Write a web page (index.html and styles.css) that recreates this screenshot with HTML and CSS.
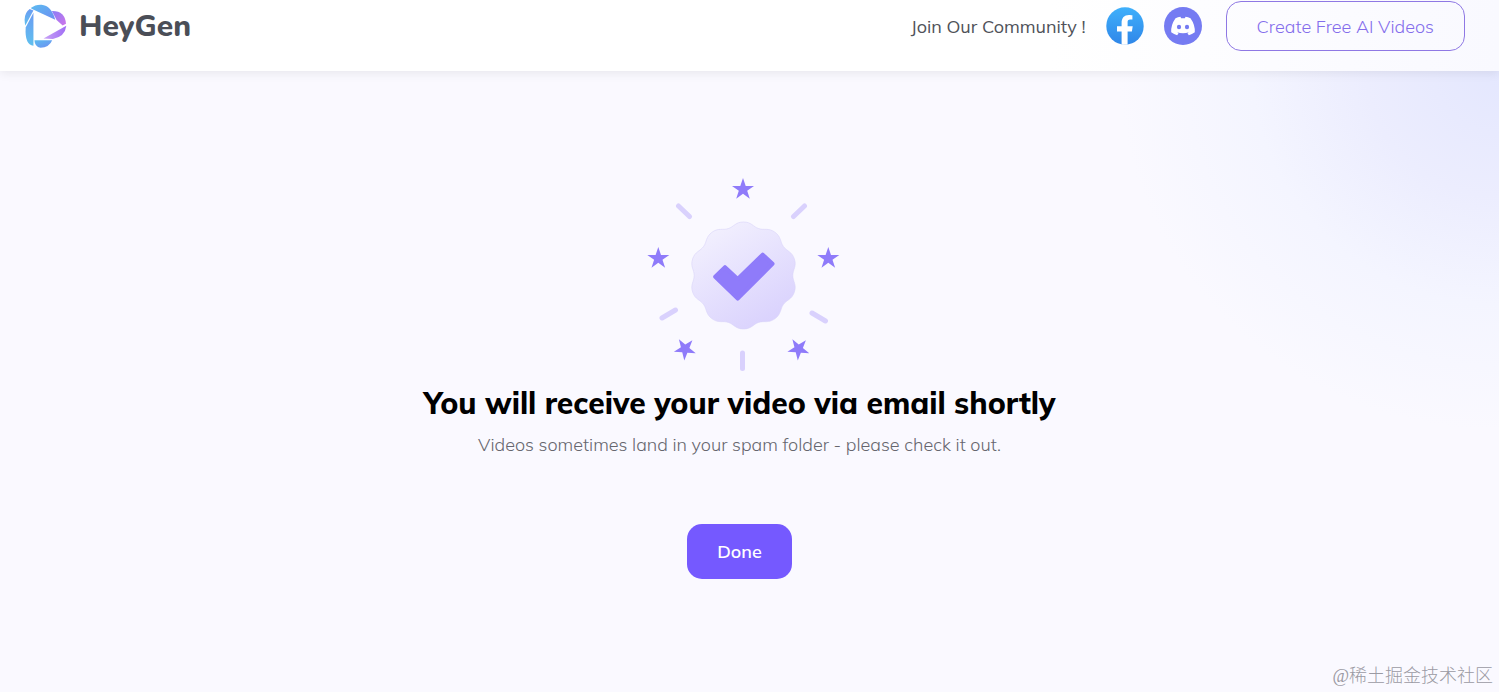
FILE: index.html
```html
<!DOCTYPE html>
<html lang="en">
<head>
    <meta charset="UTF-8">
    <meta name="viewport" content="width=device-width, initial-scale=1.0">
    <title>HeyGen</title>
    <link rel="stylesheet" href="styles.css">
</head>
<body>

    <header class="topbar">
        <a class="brand" href="#" aria-label="HeyGen home">
            <svg class="brand-mark" viewBox="72 12 128 131" aria-hidden="true">
                <defs>
                    <linearGradient id="markBlue" x1="0" y1="0" x2="1" y2="1">
                        <stop offset="0" stop-color="#5bbcf0"/>
                        <stop offset="1" stop-color="#6f8df2"/>
                    </linearGradient>
                    <linearGradient id="markSide" x1="0" y1="0" x2="0" y2="1">
                        <stop offset="0" stop-color="#6b9bf3"/>
                        <stop offset="1" stop-color="#5fc0ee"/>
                    </linearGradient>
                    <linearGradient id="markPink" x1="0" y1="0" x2="1" y2="1">
                        <stop offset="0" stop-color="#8a7df5"/>
                        <stop offset="1" stop-color="#cf74ea"/>
                    </linearGradient>
                    <linearGradient id="markPurple" x1="0" y1="0" x2="1" y2="0">
                        <stop offset="0" stop-color="#c9a3f5"/>
                        <stop offset="1" stop-color="#a06df5"/>
                    </linearGradient>
                </defs>
                <path fill="url(#markBlue)" d="M92 24Q106 13 124 14Q154 17 165 59L96 27Z"/>
                <path fill="url(#markSide)" d="M76 76Q68 42 89 27L100 31Z"/>
                <path fill="url(#markSide)" d="M100 38V136Q74 134 77 82Z"/>
                <path fill="url(#markBlue)" d="M103 120H156Q147 142 121 142Q104 140 103 120Z"/>
                <path fill="url(#markPurple)" d="M130 115L198 77Q194 110 158 116Z"/>
                <path fill="url(#markPink)" d="M155 33Q194 32 197 71L187 76L169 60Z"/>
            </svg>
            <span class="brand-name">HeyGen</span>
        </a>

        <nav class="community">
            <span class="community-label">Join Our Community !</span>
            <a class="social" href="#" aria-label="Facebook">
                <svg viewBox="0 0 38 38" aria-hidden="true">
                    <defs>
                        <linearGradient id="fbBlue" x1="0" y1="0" x2="0" y2="1">
                            <stop offset="0" stop-color="#3fb0fb"/>
                            <stop offset="1" stop-color="#2f86e8"/>
                        </linearGradient>
                    </defs>
                    <circle cx="19" cy="19" r="18.7" fill="url(#fbBlue)"/>
                    <path fill="#fff" d="M15.6 37.4V24.4H11V19.2H15.6V16C15.6 10.8 18.2 7.9 23 7.9C24.6 7.9 26.4 8.2 26.4 8.2V12.6H24.2C22.2 12.6 21.6 13.8 21.6 15.2V19.2H26.7L25.9 24.4H21.6V37.4Q18.6 38 15.6 37.4Z"/>
                </svg>
            </a>
            <a class="social" href="#" aria-label="Discord">
                <svg viewBox="0 0 38 38" aria-hidden="true">
                    <circle cx="19" cy="19" r="19" fill="#757bf2"/>
                    <path fill="#fff" d="M11.5 11.2Q14 10 16.4 9.8L17.2 11.3Q19 11 20.8 11.3L21.6 9.8Q24 10 26.5 11.2Q31.3 18 30.8 25.3Q28 27.5 24.8 28.2L23.4 26L25.2 25.1Q19 27.6 12.8 25.1L14.6 26L13.2 28.2Q10 27.5 7.2 25.3Q6.7 18 11.5 11.2Z"/>
                    <ellipse cx="15" cy="20" rx="2.1" ry="2.3" fill="#757bf2"/>
                    <ellipse cx="23" cy="20" rx="2.1" ry="2.3" fill="#757bf2"/>
                </svg>
            </a>
            <button class="create-button" type="button">Create Free AI Videos</button>
        </nav>
    </header>

    <main class="result">
        <svg class="badge" viewBox="640 177 200 194" aria-hidden="true">
            <defs>
                <linearGradient id="sealFill" x1="0.2" y1="0" x2="0.8" y2="1">
                    <stop offset="0" stop-color="#f3f1fe"/>
                    <stop offset="1" stop-color="#d8d0fd"/>
                </linearGradient>
                <path id="star" fill="#8f7bfa" d="M0-11.5L2.7-3.6H11L4.2 1.3L6.8 9.2L0 4.3L-6.8 9.2L-4.2 1.3L-11-3.6H-2.7Z"/>
            </defs>
            <path transform="translate(743.5 275.5)" fill="url(#sealFill)" stroke="#d9d3f8" stroke-width="0.6"
                d="M0-53.5C8-53.5 9.5-48.8 15.2-46.9C20.9-45 24.9-48 31.4-43.3C37.9-38.6 36.4-33.9 39.9-29C43.4-24.1 48.4-24.1 50.9-16.5C53.4-8.9 49.3-6 49.3 0C49.3 6 53.4 8.9 50.9 16.5C48.4 24.1 43.4 24.1 39.9 29C36.4 33.9 37.9 38.6 31.4 43.3C24.9 48 20.9 45 15.2 46.9C9.5 48.8 8 53.5 0 53.5C-8 53.5-9.5 48.8-15.2 46.9C-20.9 45-24.9 48-31.4 43.3C-37.9 38.6-36.4 33.9-39.9 29C-43.4 24.1-48.4 24.1-50.9 16.5C-53.4 8.9-49.3 6-49.3 0C-49.3-6-53.4-8.9-50.9-16.5C-48.4-24.1-43.4-24.1-39.9-29C-36.4-33.9-37.9-38.6-31.4-43.3C-24.9-48-20.9-45-15.2-46.9C-9.5-48.8-8-53.5 0-53.5Z"/>
            <path fill="#8f7bfa" stroke="#8f7bfa" stroke-width="4" stroke-linejoin="round" d="M725 267.2L737.7 279L762.7 254.6L772.5 263.8L737.7 298.6L715.2 276.7Z"/>
            <use href="#star" x="743" y="189.5"/>
            <use href="#star" x="658.3" y="258.5"/>
            <use href="#star" x="828.3" y="258.5"/>
            <use href="#star" transform="translate(685 349) rotate(40)"/>
            <use href="#star" transform="translate(798.5 349) rotate(40)"/>
            <path fill="none" stroke="#d9d1fd" stroke-width="5" stroke-linecap="round" d="M678.5 206L689.5 216.5M804.5 206L793.5 216.5M662 318L675.5 310M812 313L825.5 321M742.5 353V368.5"/>
        </svg>
        <h1 class="result-title">You will receive your video via email shortly</h1>
        <p class="result-note">Videos sometimes land in your spam folder - please check it out.</p>
        <button class="done-button" type="button">Done</button>
    </main>

    <footer class="watermark">@稀土掘金技术社区</footer>

</body>
</html>
```

FILE: styles.css
```css
* {
    box-sizing: border-box;
}
body {
    display: flex;
    flex-direction: column;
    min-height: 100vh;
    margin: 0;
    font-family: Mulish, Lato, sans-serif;
    font-size: 18px;
    background: radial-gradient(ellipse 380px 360px at 100% 70px, #e4e7fe, #ecedfe 35%, #f4f5ff 65%, rgba(250, 250, 255, 0)), #faf9ff;
}
.topbar {
    display: flex;
    align-items: center;
    justify-content: space-between;
    padding: 1px 34px 20px 24px;
    background: linear-gradient(90deg, #fff 70%, #f9f9ff);
    box-shadow: 0 2px 10px rgba(0, 0, 0, 0.08);
}
.brand {
    display: flex;
    align-items: center;
    gap: 12px;
    color: #4b4e57;
    text-decoration: none;
}
.brand-mark {
    width: 43px;
    height: 44px;
}
.brand-name {
    font-family: Nunito, "Noto Sans", sans-serif;
    font-size: 30px;
    font-weight: 800;
}
.community {
    display: flex;
    align-items: center;
    gap: 20px;
}
.community-label {
    color: #4f5259;
}
.social {
    display: flex;
}
.social svg {
    width: 38px;
    height: 38px;
}
.create-button {
    height: 50px;
    margin-left: 4px;
    padding: 0 30px;
    border: 1px solid #8f78e4;
    border-radius: 15px;
    background: transparent;
    color: #846dec;
    font: inherit;
    font-weight: 350;
    cursor: pointer;
}
.result {
    display: flex;
    flex-direction: column;
    align-items: center;
    flex: 1;
    padding: 106px 20px 40px;
    margin-right: 20px;
    text-align: center;
}
.badge {
    width: 200px;
    height: 194px;
}
.result-title {
    margin: 12px 0 0;
    font-size: 30px;
    line-height: 40px;
    font-weight: 800;
    color: #000;
}
.result-note {
    margin: 8px 0 0;
    line-height: 28px;
    font-weight: 300;
    color: #66666e;
}
.done-button {
    height: 55px;
    margin-top: 65px;
    padding: 0 30px;
    border: none;
    border-radius: 15px;
    background: #7559ff;
    color: #fff;
    font: inherit;
    font-weight: 600;
    cursor: pointer;
}
.watermark {
    padding: 0 6px 4px;
    text-align: right;
    font-family: "Liberation Serif", "Noto Sans CJK SC", serif;
    font-weight: 300;
    line-height: 24px;
    color: #9b9aa3;
}
```
